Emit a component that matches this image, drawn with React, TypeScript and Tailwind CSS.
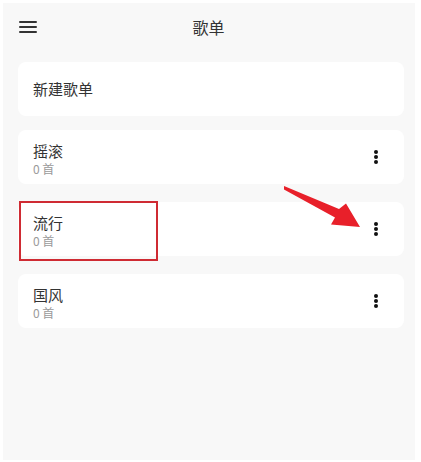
import React from 'react';

const lists = [
  { name: '摇滚', count: 0 },
  { name: '流行', count: 0 },
  { name: '国风', count: 0 },
];

function Dots() {
  return (
    <div className="flex flex-col items-center gap-[1.5px] w-[10px]">
      <span className="w-[3.5px] h-[3.5px] rounded-full bg-[#111]" />
      <span className="w-[3.5px] h-[3.5px] rounded-full bg-[#111]" />
      <span className="w-[3.5px] h-[3.5px] rounded-full bg-[#111]" />
    </div>
  );
}

export default function App() {
  return (
    <div
      className="relative w-[421px] h-[462px] bg-white pl-[3px] pr-[6px] pt-[3px] pb-[2px] overflow-hidden"
      style={{ fontFamily: '"Noto Sans CJK SC", "Noto Sans", sans-serif' }}
    >
      <div className="h-full bg-[#f8f8f8]">
        {/* Header */}
        <div className="flex items-center h-[48px] pl-[16px] pr-[16px]">
          <div className="flex flex-col gap-[3px] w-[18px]">
            <span className="h-[2px] bg-[#333] rounded-sm" />
            <span className="h-[2px] bg-[#333] rounded-sm" />
            <span className="h-[2px] bg-[#333] rounded-sm" />
          </div>
          <div className="flex-1 text-center text-[16px] text-[#333] leading-none pr-[1px]">歌单</div>
          <div className="w-[18px]" />
        </div>

        <div className="flex flex-col pl-[15px] pr-[11px] pt-[11px]">
          {/* New playlist */}
          <div className="h-[54px] bg-white rounded-[8px] flex items-center pl-[15px] text-[15px] text-[#333] mb-[14px]">
            新建歌单
          </div>

          <div className="flex flex-col gap-[18px]">
            {lists.map((l) => (
              <div key={l.name} className="h-[54px] bg-white rounded-[8px] flex items-center pl-[15px] pr-[23px]">
                <div className="flex-1 flex flex-col self-start pt-[11px]">
                  <span className="text-[15px] leading-[20px] text-[#333]">{l.name}</span>
                  <span className="text-[12px] leading-[16px] text-[#9a9a9a]">{l.count} 首</span>
                </div>
                <Dots />
              </div>
            ))}
          </div>
        </div>
      </div>

      {/* Annotation overlays */}
      <div className="absolute left-[19px] top-[201px] w-[139px] h-[60px] border-2 border-[#cf2b33]" />
      <svg className="absolute left-0 top-0" width="421" height="462" viewBox="0 0 421 462">
        <polygon
          points="284,186 339,209 346,203.5 360,227 331,224.5 335,217.5 284,189.5"
          fill="#e8202a"
        />
      </svg>
    </div>
  );
}
